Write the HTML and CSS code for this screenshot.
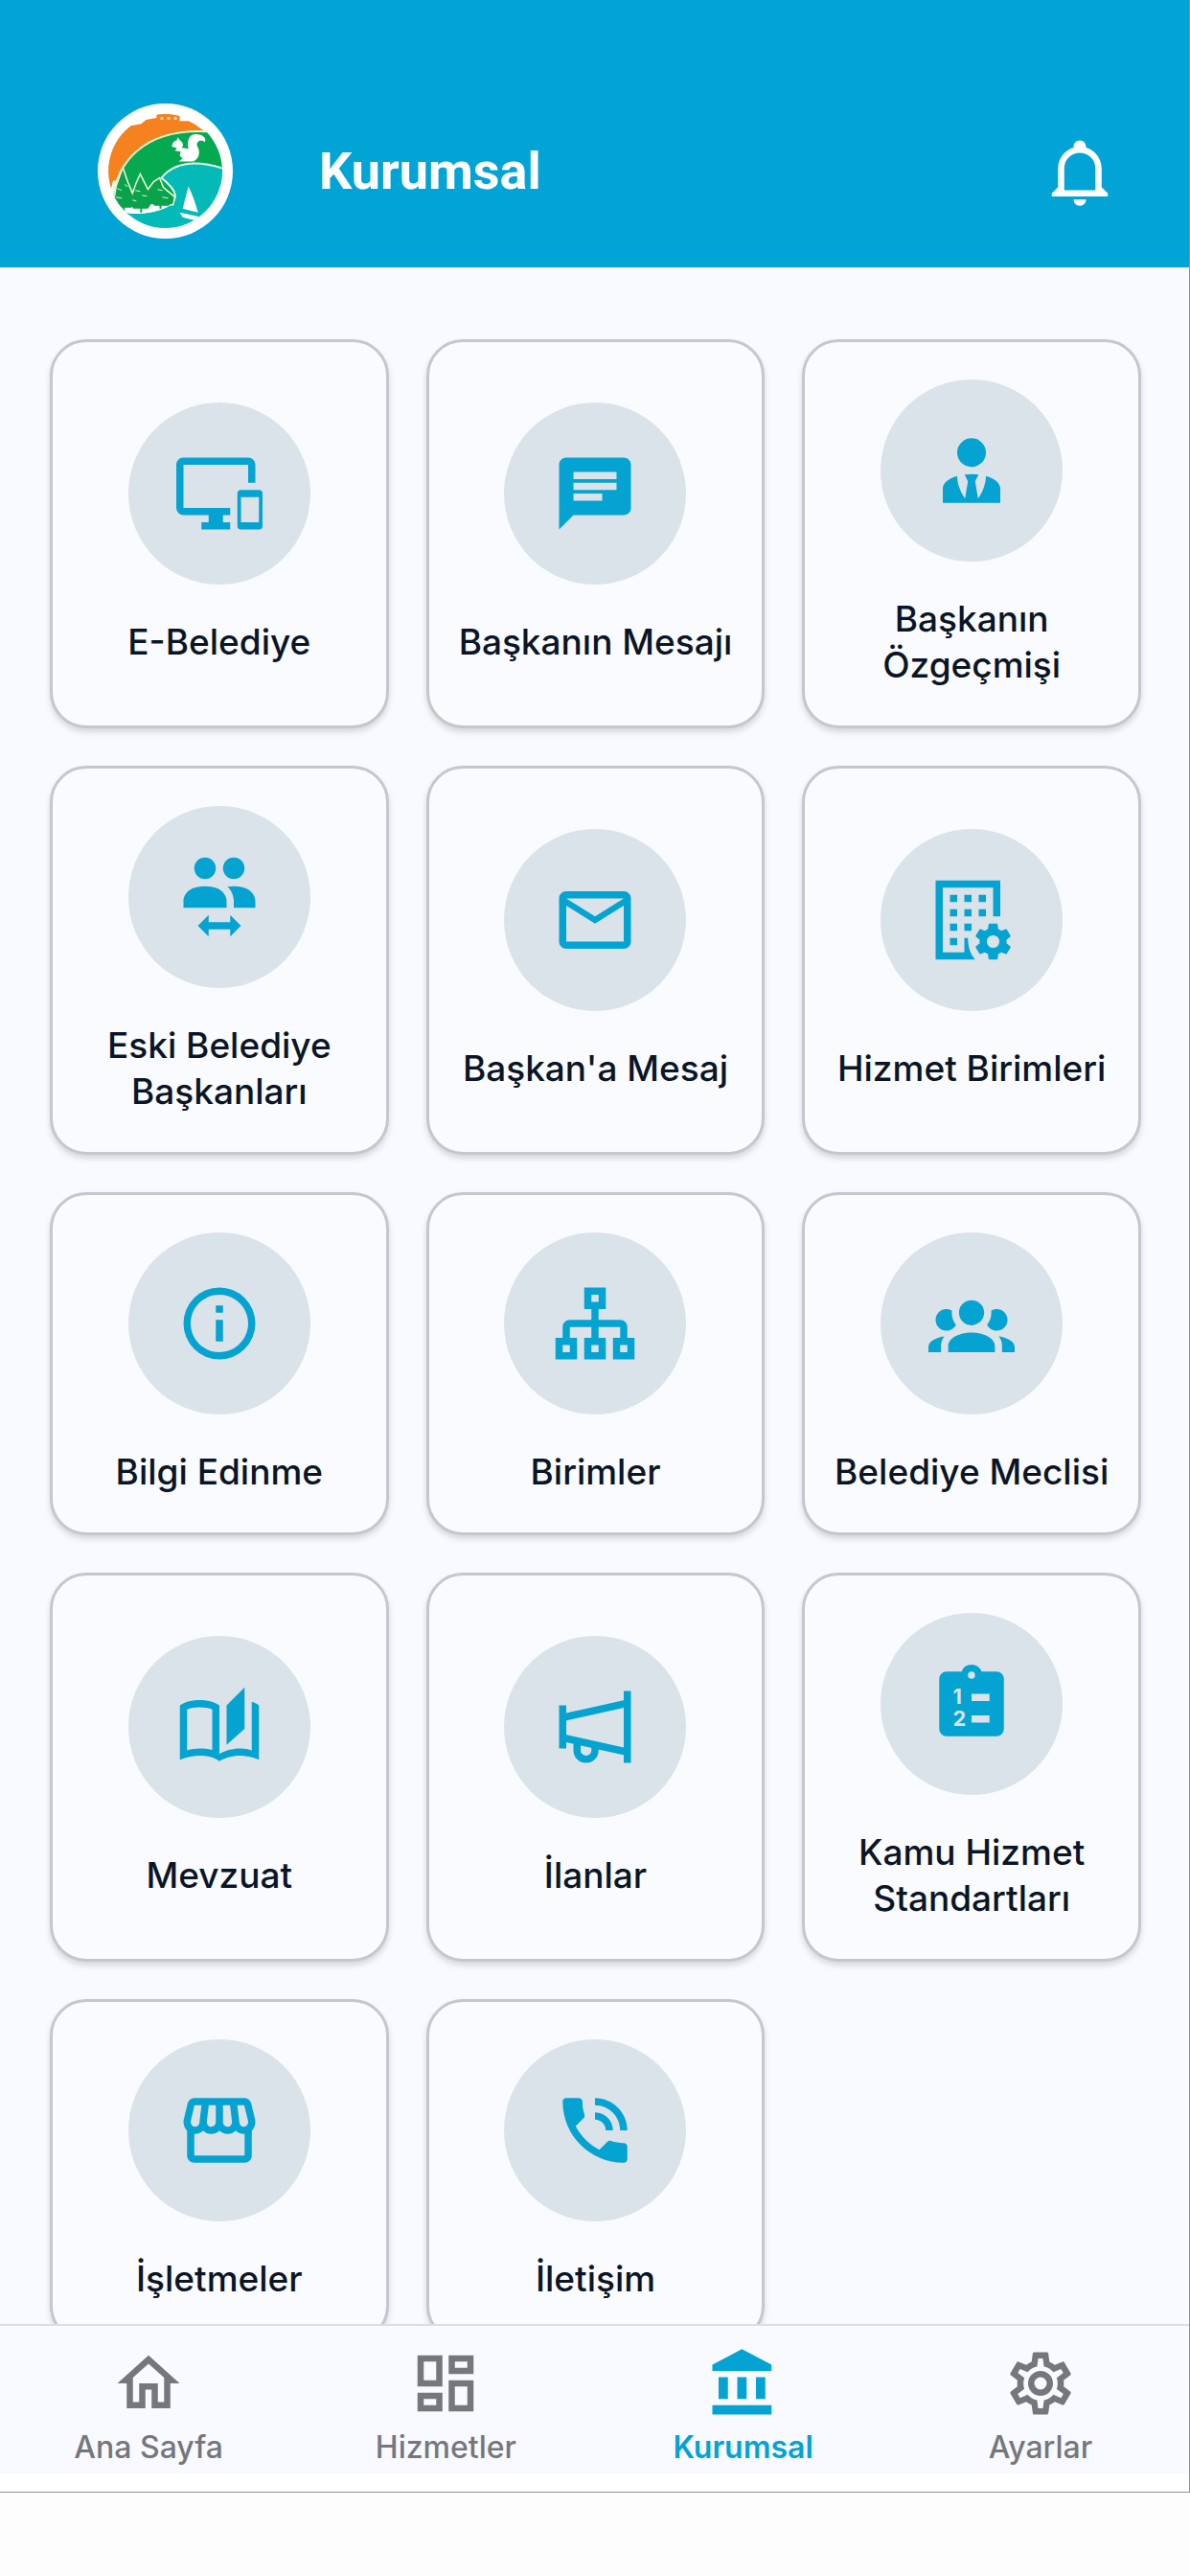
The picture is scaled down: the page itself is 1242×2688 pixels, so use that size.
FILE: index.html
```
<!DOCTYPE html>
<html lang="tr">
<head>
  <meta charset="UTF-8" />
  <meta name="viewport" content="width=device-width, initial-scale=1.0" />
  <title>Kurumsal</title>
  <link rel="stylesheet" href="styles.css">
</head>
<body>
  <div class="app">
    <header class="header">
      <svg class="logo" viewBox="0 0 140 140" aria-hidden="true">
        <defs>
          <clipPath id="disc"><circle cx="70" cy="70" r="59" /></clipPath>
        </defs>
        <circle cx="70" cy="70" r="70" fill="#fff" />
        <g clip-path="url(#disc)">
          <!-- castle hill -->
          <path fill="#f5821f" d="M0 140V50L34 23L45 21L50 17L61 15V11H85V18L94 18L100 21L114 31V80H16Z" />
          <path fill="#fbd9b0" d="M65 14h3v3h-3zM72 14h3v3h-3zM79 14h3v3h-3z" />
          <!-- green hill -->
          <path fill="#05a94f" stroke="#f4f3c8" stroke-width="2" d="M15 100C20 62 46 26 113 29L140 40V80L18 118Z" />
          <!-- lake -->
          <path fill="#04bab9" stroke="#e9fbf2" stroke-width="2" d="M66 77C82 58 108 60 132 68V140H20L28 112C52 116 82 108 80 94C79 88 72 82 66 77Z" />
          <!-- trees -->
          <path fill="#fff" d="M14 96L80 97C78 108 52 117 26 113L14 106Z" />
          <path fill="#0ba24c" stroke="#f1f8dc" stroke-width="1.500" d="M26 66L31 81L36 93L40 82L44 73L48 81L52 89L58 81L64 77L68 87L74 92L80 97L78 105L16 105L19 86Z" />
          <path fill="#0ba24c" d="M17 103h21l-3 5H20zM33 103h23l-4 6H37zM55 102h24l-6 4h-14zM26 106h2v7h-2zM44 107h2v6h-2zM64 104h2v5h-2z" />
          <path fill="none" stroke="#d9f0c4" stroke-width="1" d="M20 88l5 2M28 84l3 2M19 97l6 1M39 90l5 1M46 95l5 1M62 89l5 1M67 97l6 1M36 100l4 1" />
          <!-- squirrel -->
          <path fill="#fff" d="M94 47C92 37 96 31 103 32C110 32 113 37 111 40C107 37 102 39 103 44C107 50 105 58 99 60H84L88 57L85 54L86 50L80 49L82 46L77 45C77 41 79 39 82 38L83 35L86 39C89 41 89 44 87 46Z" />
          <!-- boat -->
          <path fill="#fff" d="M94 86L88 109L104 113C101 103 98 94 94 86ZM85 113L108 118L100 121L88 118Z" />
        </g>
      </svg>
      <h1 class="title">Kurumsal</h1>
      <button class="bell" type="button" aria-label="Bildirimler">
        <svg viewBox="0 0 24 24"><path d="M10 21h4c0 1.100-.9 2-2 2s-2-.9-2-2m11-2v1H3v-1l2-2v-6c0-3.100 2-5.800 5-6.700V4c0-1.100.9-2 2-2s2 .9 2 2v.3c3 .9 5 3.600 5 6.700v6l2 2m-4-8c0-2.800-2.200-5-5-5s-5 2.200-5 5v7h10v-7z" /></svg>
      </button>
    </header>

    <main class="content">
      <div class="grid">
        <a class="card" href="#">
          <span class="icon"><svg viewBox="0 0 24 24"><path d="M23 11H18A1 1 0 0 0 17 12V21A1 1 0 0 0 18 22H23A1 1 0 0 0 24 21V12A1 1 0 0 0 23 11M23 20H18V13H23V20M20 2H2C.89 2 0 2.890 0 4V16A2 2 0 0 0 2 18H9V20H7V22H15V20H13V18H15V16H2V4H20V9H22V4C22 2.890 21.100 2 20 2Z" /></svg></span>
          <span class="label">E-Belediye</span>
        </a>
        <a class="card" href="#">
          <span class="icon"><svg viewBox="0 0 24 24"><path d="M20 2H4c-1.100 0-1.990.9-1.990 2L2 22l4-4h14c1.100 0 2-.9 2-2V4c0-1.100-.9-2-2-2zM6 9h12v2H6V9zm8 5H6v-2h8v2zm4-6H6V6h12v2z" /></svg></span>
          <span class="label">Başkanın Mesajı</span>
        </a>
        <a class="card" href="#">
          <span class="icon"><svg viewBox="0 0 24 24"><path d="M12 3A4 4 0 0 1 16 7A4 4 0 0 1 12 11A4 4 0 0 1 8 7A4 4 0 0 1 12 3M16 13.540C16 14.600 15.720 17.070 13.810 19.830L13 15L13.940 13.120C13.320 13.050 12.670 13 12 13S10.680 13.050 10.060 13.120L11 15L10.190 19.830C8.280 17.070 8 14.600 8 13.540C5.610 14.240 4 15.500 4 17V21H20V17C20 15.500 18.400 14.240 16 13.540Z" /></svg></span>
          <span class="label">Başkanın Özgeçmişi</span>
        </a>
        <a class="card" href="#">
          <span class="icon"><svg viewBox="0 0 24 24"><path d="M16 9C22 9 22 13 22 13V15H16V13C16 13 16 11.310 14.850 9.800C14.680 9.570 14.470 9.350 14.250 9.140C14.770 9.060 15.340 9 16 9M2 13C2 13 2 9 8 9S14 13 14 13V15H2V13M9 17V19H15V17L18 20L15 23V21H9V23L6 20L9 17M8 1A3 3 0 0 0 8 7A3 3 0 0 0 8 1M16 1A3 3 0 0 0 16 7A3 3 0 0 0 16 1Z" /></svg></span>
          <span class="label">Eski Belediye Başkanları</span>
        </a>
        <a class="card" href="#">
          <span class="icon"><svg viewBox="0 0 24 24"><path d="M22 6C22 4.900 21.100 4 20 4H4C2.900 4 2 4.900 2 6V18C2 19.100 2.900 20 4 20H20C21.100 20 22 19.100 22 18V6M20 6L12 11L4 6H20M20 18H4V8L12 13L20 8V18Z" /></svg></span>
          <span class="label">Başkan'a Mesaj</span>
        </a>
        <a class="card" href="#">
          <span class="icon"><svg viewBox="0 0 24 24">
            <path d="M2 1H20V11H18V3H4V21H10V17H11C11 19.500 11.700 21.500 13 23H2ZM6 5H8V7H6ZM10 5H12V7H10ZM14 5H16V7H14ZM6 9H8V11H6ZM10 9H12V11H10ZM14 9H16V11H14ZM6 13H8V15H6ZM10 13H12V15H10ZM6 17H8V19H6Z" />
            <path transform="translate(12 12) scale(.5)" d="M12 15.500A3.500 3.500 0 0 1 8.500 12A3.500 3.500 0 0 1 12 8.500A3.500 3.500 0 0 1 15.500 12A3.500 3.500 0 0 1 12 15.500M19.430 12.970C19.470 12.650 19.500 12.330 19.500 12C19.500 11.670 19.470 11.340 19.430 11L21.540 9.370C21.730 9.220 21.780 8.950 21.660 8.730L19.660 5.270C19.540 5.050 19.270 4.960 19.050 5.050L16.560 6.050C16.040 5.660 15.500 5.320 14.870 5.070L14.500 2.420C14.460 2.180 14.250 2 14 2H10C9.750 2 9.540 2.180 9.500 2.420L9.130 5.070C8.500 5.320 7.960 5.660 7.440 6.050L4.950 5.050C4.730 4.960 4.460 5.050 4.340 5.270L2.340 8.730C2.210 8.950 2.270 9.220 2.460 9.370L4.570 11C4.530 11.340 4.500 11.670 4.500 12C4.500 12.330 4.530 12.650 4.570 12.970L2.460 14.630C2.270 14.780 2.210 15.050 2.340 15.270L4.340 18.730C4.460 18.950 4.730 19.030 4.950 18.950L7.440 17.940C7.960 18.340 8.500 18.680 9.130 18.930L9.500 21.580C9.540 21.820 9.750 22 10 22H14C14.250 22 14.460 21.820 14.500 21.580L14.870 18.930C15.500 18.670 16.040 18.340 16.560 17.940L19.050 18.950C19.270 19.030 19.540 18.950 19.660 18.730L21.660 15.270C21.780 15.050 21.730 14.780 21.540 14.630L19.430 12.970Z" />
          </svg></span>
          <span class="label">Hizmet Birimleri</span>
        </a>
        <a class="card" href="#">
          <span class="icon"><svg viewBox="0 0 24 24"><path d="M11 9H13V7H11M12 20C7.590 20 4 16.410 4 12S7.590 4 12 4S20 7.590 20 12S16.410 20 12 20M12 2A10 10 0 0 0 2 12A10 10 0 0 0 12 22A10 10 0 0 0 22 12A10 10 0 0 0 12 2M11 17H13V11H11V17Z" /></svg></span>
          <span class="label">Bilgi Edinme</span>
        </a>
        <a class="card" href="#">
          <span class="icon"><svg viewBox="0 0 24 24"><path d="M15 2H9V8H11V11H5C3.900 11 3 11.900 3 13V16H1V22H7V16H5V13H11V16H9V22H15V16H13V13H19V16H17V22H23V16H21V13C21 11.900 20.110 11 19 11H13V8H15V2M13 6H11V4H13V6M5 20H3V18H5V20M13 20H11V18H13V20M21 20H19V18H21V20Z" /></svg></span>
          <span class="label">Birimler</span>
        </a>
        <a class="card" href="#">
          <span class="icon"><svg viewBox="0 0 24 24"><path d="M12 5.500A3.500 3.500 0 0 1 15.500 9A3.500 3.500 0 0 1 12 12.500A3.500 3.500 0 0 1 8.500 9A3.500 3.500 0 0 1 12 5.500M5 8C5.560 8 6.080 8.150 6.530 8.420C6.380 9.850 6.800 11.270 7.660 12.380C7.160 13.340 6.160 14 5 14A3 3 0 0 1 2 11A3 3 0 0 1 5 8M19 8A3 3 0 0 1 22 11A3 3 0 0 1 19 14C17.840 14 16.840 13.340 16.340 12.380C17.200 11.270 17.620 9.850 17.470 8.420C17.920 8.150 18.440 8 19 8M5.500 18.250C5.500 16.180 8.410 14.500 12 14.500C15.590 14.500 18.500 16.180 18.500 18.250V20H5.500V18.250M0 20V18.500C0 17.110 1.890 15.940 4.450 15.600C3.860 16.280 3.500 17.220 3.500 18.250V20H0M24 20H20.500V18.250C20.500 17.220 20.140 16.280 19.550 15.600C22.110 15.940 24 17.110 24 18.500V20Z" /></svg></span>
          <span class="label">Belediye Meclisi</span>
        </a>
        <a class="card" href="#">
          <span class="icon"><svg viewBox="0 0 24 24"><path fill-rule="evenodd" d="M19 1L14 6V17L19 12.500V1M21 5V18.500C19.900 18.150 18.700 18 17.500 18C15.800 18 13.350 18.650 12 19.500V6C10.550 4.900 8.450 4.500 6.500 4.500C4.550 4.500 2.450 4.900 1 6V21.100C3.100 20.350 5.050 20 6.500 20C8.450 20 10.550 20.400 12 21.500C13.350 20.650 15.800 20 17.500 20C19.150 20 21.300 20.300 23 21.100V6C22.400 5.550 21.750 5.250 21 5M10 18.410C8.750 18.090 7.500 18 6.500 18C5.440 18 4.180 18.190 3 18.500V7.130C3.910 6.730 5.140 6.500 6.500 6.500C7.860 6.500 9.090 6.730 10 7.130V18.410Z" /></svg></span>
          <span class="label">Mevzuat</span>
        </a>
        <a class="card" href="#">
          <span class="icon"><svg viewBox="0 0 24 24">
            <path d="M2 6H4V18H2ZM20 2H22V22H20Z" />
            <path class="line" d="M3 9.400L21 5.400M3 15L21 19M7 16v2.500a2.500 2.500 0 0 0 5 0V17" />
          </svg></span>
          <span class="label">İlanlar</span>
        </a>
        <a class="card" href="#">
          <span class="icon"><svg viewBox="0 0 240 240">
            <path fill-rule="evenodd" d="M50 30H92A30 30 0 0 1 148 30H190A20 20 0 0 1 210 50V190A20 20 0 0 1 190 210H50A20 20 0 0 1 30 190V50A20 20 0 0 1 50 30ZM120 30A10 10 0 0 0 120 50A10 10 0 0 0 120 30ZM120 92V112H170V92ZM120 152V172H170V152Z" />
            <text class="num" x="68" y="121">1</text>
            <text class="num" x="68" y="181">2</text>
          </svg></span>
          <span class="label">Kamu Hizmet Standartları</span>
        </a>
        <a class="card" href="#">
          <span class="icon"><svg viewBox="0 0 24 24"><path d="M21.900 8.890l-1.050-4.370c-.22-.9-1-1.520-1.910-1.520H5.050c-.9 0-1.690.63-1.900 1.520L2.100 8.890c-.24 1.020-.02 2.060.62 2.880.08.11.19.19.28.29V19c0 1.100.9 2 2 2h14c1.100 0 2-.9 2-2v-6.940c.09-.09.2-.18.28-.28.64-.82.87-1.870.62-2.890zm-2.990-3.900l1.050 4.370c.1.42.01.84-.25 1.170-.14.18-.44.47-.94.47-.61 0-1.140-.49-1.210-1.140L16.980 5l1.930-.01zM13 5h1.960l.54 4.520c.05.39-.07.78-.33 1.070-.22.26-.54.41-.95.41-.67 0-1.220-.59-1.220-1.310V5zM8.490 9.520L9.040 5H11v4.690c0 .72-.55 1.310-1.290 1.310-.34 0-.65-.15-.89-.41-.25-.29-.37-.68-.33-1.070zm-4.450-.16L5.050 5h1.970l-.58 4.860c-.08.65-.6 1.140-1.210 1.140-.49 0-.8-.29-.93-.47-.27-.32-.36-.75-.26-1.170zM5 19v-6.030c.08.01.15.03.23.03.87 0 1.660-.36 2.240-.95.6.6 1.400.95 2.310.95.87 0 1.650-.36 2.230-.93.59.57 1.390.93 2.290.93.84 0 1.640-.35 2.240-.95.58.59 1.370.95 2.240.95.08 0 .15-.02.23-.03V19H5z" /></svg></span>
          <span class="label">İşletmeler</span>
        </a>
        <a class="card" href="#">
          <span class="icon"><svg viewBox="0 0 24 24"><path d="M20 15.500c-1.250 0-2.450-.2-3.570-.57-.35-.11-.74-.03-1.020.24l-2.200 2.200c-2.830-1.440-5.150-3.750-6.590-6.580l2.200-2.210c.28-.27.36-.66.25-1.010C8.700 6.450 8.500 5.250 8.500 4c0-.55-.45-1-1-1H4c-.55 0-1 .45-1 1 0 9.390 7.610 17 17 17 .55 0 1-.45 1-1v-3.500c0-.55-.45-1-1-1zM19 12h2c0-4.970-4.030-9-9-9v2c3.870 0 7 3.130 7 7zm-4 0h2c0-2.760-2.240-5-5-5v2c1.660 0 3 1.340 3 3z" /></svg></span>
          <span class="label">İletişim</span>
        </a>
      </div>
    </main>

    <nav class="tabs">
      <a class="tab" href="#">
        <svg viewBox="0 0 24 24"><path d="M12 5.690L17 10.190V18H15V12H9V18H7V10.190L12 5.690M12 3L2 12H5V20H11V14H13V20H19V12H22" /></svg>
        <span>Ana Sayfa</span>
      </a>
      <a class="tab" href="#">
        <svg viewBox="0 0 24 24"><path d="M19 5V7H15V5H19M9 5V11H5V5H9M19 13V19H15V13H19M9 17V19H5V17H9M21 3H13V9H21V3M11 3H3V13H11V3M21 11H13V21H21V11M11 15H3V21H11V15Z" /></svg>
        <span>Hizmetler</span>
      </a>
      <a class="tab active" href="#">
        <svg viewBox="0 0 24 24"><path d="M11.500 1L2 6v2h19V6M16 10v7h3v-7M2 22h19v-3H2m8-9v7h3v-7m-9 0v7h3v-7H4z" /></svg>
        <span>Kurumsal</span>
      </a>
      <a class="tab" href="#">
        <svg viewBox="0 0 24 24"><path d="M12 8A4 4 0 0 1 16 12A4 4 0 0 1 12 16A4 4 0 0 1 8 12A4 4 0 0 1 12 8M12 10A2 2 0 0 0 10 12A2 2 0 0 0 12 14A2 2 0 0 0 14 12A2 2 0 0 0 12 10M10 22C9.750 22 9.540 21.820 9.500 21.580L9.130 18.930C8.500 18.680 7.960 18.340 7.440 17.940L4.950 18.950C4.730 19.030 4.460 18.950 4.340 18.730L2.340 15.270C2.210 15.050 2.270 14.780 2.460 14.630L4.570 12.970L4.500 12L4.570 11L2.460 9.370C2.270 9.220 2.210 8.950 2.340 8.730L4.340 5.270C4.460 5.050 4.730 4.960 4.950 5.050L7.440 6.050C7.960 5.660 8.500 5.320 9.130 5.070L9.500 2.420C9.540 2.180 9.750 2 10 2H14C14.250 2 14.460 2.180 14.500 2.420L14.870 5.070C15.500 5.320 16.040 5.660 16.560 6.050L19.050 5.050C19.270 4.960 19.540 5.050 19.660 5.270L21.660 8.730C21.790 8.950 21.730 9.220 21.540 9.370L19.430 11L19.500 12L19.430 13L21.540 14.630C21.730 14.780 21.790 15.050 21.660 15.270L19.660 18.730C19.540 18.950 19.270 19.040 19.050 18.950L16.560 17.950C16.040 18.340 15.500 18.680 14.870 18.930L14.500 21.580C14.460 21.820 14.250 22 14 22H10M11.250 4L10.880 6.610C9.680 6.860 8.620 7.500 7.850 8.390L5.440 7.350L4.690 8.650L6.800 10.200C6.400 11.370 6.400 12.640 6.800 13.800L4.680 15.360L5.430 16.660L7.860 15.620C8.630 16.500 9.680 17.140 10.870 17.380L11.240 20H12.760L13.130 17.390C14.320 17.140 15.370 16.500 16.140 15.620L18.570 16.660L19.320 15.360L17.200 13.810C17.600 12.640 17.600 11.370 17.200 10.200L19.310 8.650L18.560 7.350L16.150 8.390C15.380 7.500 14.320 6.860 13.120 6.620L12.750 4H11.250Z" /></svg>
        <span>Ayarlar</span>
      </a>
    </nav>
  </div>
</body>
</html>
```
FILE: styles.css
```
* {
  box-sizing: border-box;
}
body {
  margin: 0;
  height: 100vh;
  padding-bottom: 87px;
  background: #fdfdfd;
  font-family: Inter, Roboto, sans-serif;
  color: #0b1526;
}
a {
  color: inherit;
  text-decoration: none;
}
svg {
  display: block;
  fill: currentColor;
}
.app {
  display: flex;
  flex-direction: column;
  height: 100%;
  padding-bottom: 19px;
  background: #fff;
  border-right: 1px solid #909195;
  border-bottom: 1px solid #909195;
}
.header {
  display: flex;
  align-items: center;
  flex-shrink: 0;
  padding: 108px 75px 30px 102px;
  background: #02a4d6;
  color: #fff;
}
.logo {
  width: 141px;
  height: 141px;
}
.title {
  flex: 1;
  margin: 0 0 0 90px;
  font-family: Roboto, sans-serif;
  font-size: 54px;
  font-weight: 700;
  line-height: 64px;
}
.bell {
  padding: 0;
  border: 0;
  background: none;
  color: #fff;
}
.bell svg {
  width: 78px;
  height: 78px;
}
.content {
  flex: 1;
  min-height: 0;
  overflow: hidden;
  padding: 75px 50px 0 52px;
  background: #f8faff;
}
.grid {
  display: grid;
  grid-template-columns: repeat(3, 1fr);
  gap: 39px;
}
.card {
  display: flex;
  flex-direction: column;
  align-items: center;
  justify-content: center;
  gap: 36px;
  padding: 39px 16px;
  border: 3px solid #c6c7cb;
  border-radius: 38px;
  background: #f9fbff;
  box-shadow: 0 4px 6px rgba(0, 0, 0, 0.14);
}
.icon {
  display: flex;
  align-items: center;
  justify-content: center;
  width: 190px;
  height: 190px;
  border-radius: 50%;
  background: #dae3ea;
  color: #04a3d1;
}
.icon svg {
  width: 90px;
  height: 90px;
}
.line {
  fill: none;
  stroke: currentColor;
  stroke-width: 2;
}
.num {
  font-size: 58px;
  font-weight: 700;
  fill: #dae3ea;
}
.label {
  font-size: 37px;
  font-weight: 500;
  line-height: 48px;
  text-align: center;
}
.tabs {
  display: flex;
  flex-shrink: 0;
  padding: 21px 0 7px;
  border-top: 2px solid #dcdde2;
  background: #f8faff;
  color: #75777d;
}
.tab {
  flex: 1;
  display: flex;
  flex-direction: column;
  align-items: center;
  gap: 8px;
  font-size: 32px;
  font-weight: 500;
  line-height: 40px;
}
.tab svg {
  width: 78px;
  height: 78px;
}
.active {
  color: #04a3d1;
  font-weight: 600;
}
```
